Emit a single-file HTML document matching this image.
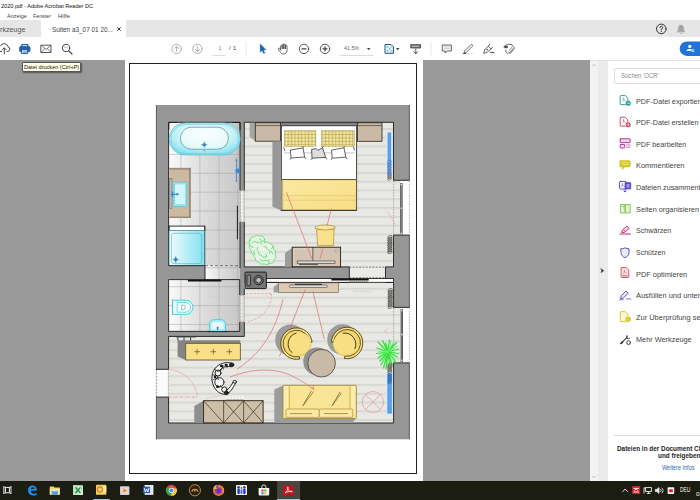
<!DOCTYPE html>
<html><head><meta charset="utf-8">
<style>
*{margin:0;padding:0;box-sizing:border-box}
html,body{width:700px;height:500px;overflow:hidden;background:#fff;font-family:"Liberation Sans",sans-serif;}
#root{position:relative;width:700px;height:500px;overflow:hidden;background:#fff}
.abs{position:absolute}
.t{position:absolute;white-space:nowrap;line-height:1}
#title{left:0;top:0;width:700px;height:11px;background:#fff}
#menu{left:0;top:11px;width:700px;height:10px;background:#fff}
#tabs{left:0;top:20px;width:700px;height:17px;background:#e6e6e6}
#tab{left:41px;top:20.4px;width:85px;height:17px;background:#fff}
#tool{left:0;top:37px;width:700px;height:23px;background:#fff}
#doc{left:0;top:60px;width:590px;height:421px;background:#999}
#paper{left:125px;top:60px;width:298px;height:421px;background:#fff}
#pborder{left:129px;top:63px;width:288px;height:411px;border:1px solid #222}
#sb{left:590px;top:60px;width:8px;height:421px;background:#f3f3f3}
#sb2{left:598px;top:60px;width:10px;height:421px;background:#ebebeb}
#panel{left:608px;top:60px;width:92px;height:421px;background:#fff}
#task{left:0;top:481px;width:700px;height:19px;background:#1b1c12}
.pi{position:absolute;left:635px;font-size:8px;color:#444;white-space:nowrap;line-height:1}
</style></head><body><div id="root">
<div id="title" class="abs"></div>
<div id="menu" class="abs"></div>
<div id="tabs" class="abs"></div>
<div id="tab" class="abs"></div>
<div id="tool" class="abs"></div>
<div id="doc" class="abs"></div>
<div id="paper" class="abs"></div>
<div id="pborder" class="abs"></div>
<div id="sb" class="abs"></div>
<div id="sb2" class="abs"></div>
<div id="panel" class="abs"></div>
<div class="abs" style="left:590px;top:60px;width:110px;height:0.8px;background:#e2e2e2"></div>
<div id="task" class="abs"></div>
<svg class="abs" style="left:0;top:0" width="700" height="500" viewBox="0 0 700 500" fill="none">
<!-- active app highlight -->
<rect x="277.1" y="481" width="23" height="19" fill="#46483e"/>
<rect x="277.1" y="499" width="23" height="1" fill="#9fc6e6"/>
<rect x="93.4" y="499" width="16.4" height="1" fill="#9fc6e6"/>
<!-- task view -->
<g stroke="#f0f0f0" stroke-width="1">
<rect x="5.4" y="487.4" width="4" height="5.4" fill="#1b1c12"/>
<path d="M3.8 486.4 V493.8 M11 486.4 V493.8" stroke-width="0.9"/>
<path d="M3.6 487 h1.2 M3.6 493.200 h1.200 M10 487 h1.200 M10 493.200 h1.200" stroke-width="1.100"/>
</g>
<!-- edge -->
<path d="M28 491.200 C27.600 487.400 30 485.400 32.600 485.400 C35.400 485.400 37 487.600 36.800 490.800 H30.800 C30.900 492.800 32.400 493.700 34.200 493.700 C35.200 493.700 36 493.500 36.600 493.100 V495 C35.800 495.400 34.800 495.600 33.600 495.600 C30.400 495.600 28.200 493.800 28 491.200 Z M30.900 489 H34.400 C34.400 487.800 33.700 487.200 32.700 487.200 C31.700 487.200 31 488 30.900 489 Z" fill="#1f8be8"/>
<!-- explorer -->
<path d="M49.800 486.600 H53.600 L54.600 487.600 H59.800 V494.600 H49.800 Z" fill="#f2d36a"/>
<rect x="49.800" y="488.600" width="10.100" height="6.100" fill="#f7e3a0"/>
<rect x="51.800" y="491" width="6" height="3.700" fill="#4a9be0"/>
<rect x="53" y="490.200" width="3.600" height="1.200" fill="#cfe4f6"/>
<!-- excel -->
<rect x="73" y="485.200" width="10" height="9.800" rx="0.600" fill="#d9efd9"/>
<rect x="73" y="485.200" width="5" height="9.800" fill="#bfe3c1"/>
<path d="M75.600 487.400 L80.400 493 M80.400 487.400 L75.600 493" stroke="#1f8a3c" stroke-width="1.400"/>
<path d="M81 486.600 h1.400 M81 488.600 h1.400 M81 490.600 h1.400" stroke="#6ab97a" stroke-width="0.700"/>
<!-- outlook -->
<rect x="96" y="484.800" width="10.300" height="10" rx="0.600" fill="#f2cf5c"/>
<rect x="101.600" y="486.400" width="4.700" height="6" fill="#f9eab0"/>
<circle cx="100" cy="489.600" r="2.500" stroke="#e08a1e" stroke-width="1.500" fill="#f6dc84"/>
<!-- media player -->
<rect x="120" y="486.200" width="9.400" height="8.800" rx="0.800" fill="#cfcfdc"/>
<rect x="121" y="487.400" width="7.400" height="6.400" fill="#e8d8d0"/>
<path d="M123.400 488.400 L127 490.600 L123.400 492.800 Z" fill="#e97f2e"/>
<!-- word -->
<rect x="144.600" y="485" width="8.800" height="9.800" fill="#f4f6fb"/>
<rect x="143.100" y="486.600" width="7" height="6.600" fill="#2a5db4"/>
<path d="M144.200 488 L145.400 492 L146.600 489 L147.800 492 L149 488" stroke="#fff" stroke-width="0.900" stroke-linejoin="round"/>
<path d="M150.800 487 h1.800 M150.800 489 h1.800 M150.800 491 h1.800" stroke="#9ab4e0" stroke-width="0.600"/>
<!-- chrome -->
<circle cx="171.400" cy="490.300" r="5.500" fill="#e04a3a"/>
<path d="M171.400 490.300 L166.650 487.550 A5.500 5.500 0 0 0 171.400 495.800 L174.150 491.900 Z" fill="#2fa655"/>
<path d="M171.400 490.300 L176.900 490.300 A5.500 5.500 0 0 1 171.400 495.800 L173.600 492 Z" fill="#f5c53a"/>
<path d="M171.400 495.800 A5.500 5.500 0 0 0 176.650 488.600 H171.400 Z" fill="#f5c53a"/>
<circle cx="171.400" cy="490.300" r="2.600" fill="#f2f2f2"/>
<circle cx="171.400" cy="490.300" r="1.900" fill="#4a8af0"/>
<!-- orange ring app -->
<circle cx="194.900" cy="490.300" r="5.600" fill="#2a2418" stroke="#d8923c" stroke-width="0.900"/>
<path d="M191.800 491.600 A3.200 3.200 0 0 1 198 491.600" stroke="#e8a048" stroke-width="1.100"/>
<circle cx="194.900" cy="490.600" r="1.100" fill="#c87a30"/>
<!-- firefox -->
<circle cx="218.600" cy="490.400" r="5.600" fill="#f0702a"/>
<path d="M214 487.400 C215 485.600 217 485 218.400 485.200 C217.600 486 217.600 487 218.400 487.600 C220.600 487.400 222.200 489 222 491 C221.800 493.200 219.800 494.400 217.800 494 C215.600 493.600 214.600 491.600 215.200 489.800 C214.400 489.400 214 488.400 214 487.400 Z" fill="#8a3fc8"/>
<path d="M213.200 489 C213.600 486.400 215.200 485 217 484.800 C215.600 486.400 215.800 488 217 489 Z" fill="#f8b03a"/>
<circle cx="218.800" cy="491" r="2.200" fill="#6a2fb0"/>
<path d="M222.400 486.400 C224.400 488.400 224.600 492 222.600 494.200 C224 491.600 223.400 488.800 222.400 486.400 Z" fill="#f8c040"/>
<!-- people app -->
<rect x="236" y="485" width="11" height="10" rx="0.600" fill="#f4f1d6"/>
<g fill="#2436c4"><circle cx="238.600" cy="487.200" r="1.200"/><rect x="237.400" y="488.600" width="2.400" height="5.400" rx="0.800"/><circle cx="244.400" cy="487.200" r="1.200"/><rect x="243.200" y="488.600" width="2.400" height="5.400" rx="0.800"/><rect x="240.600" y="489.400" width="1.800" height="4.600" rx="0.600" fill="#4a66e0"/><circle cx="241.500" cy="488" r="0.900" fill="#4a66e0"/></g>
<!-- store -->
<path d="M258.600 488 H269.200 V494.600 A0.800 0.800 0 0 1 268.400 495.400 H259.400 A0.800 0.800 0 0 1 258.600 494.600 Z" fill="#f4f4f4"/>
<path d="M261.800 488 V487 A2.100 2.100 0 0 1 266 487 V488" stroke="#f4f4f4" stroke-width="0.900"/>
<rect x="261.400" y="489.400" width="2.200" height="2.200" fill="#e8503a"/><rect x="264.200" y="489.400" width="2.200" height="2.200" fill="#7cba3a"/><rect x="261.400" y="492.200" width="2.200" height="2.200" fill="#3a9ae0"/><rect x="264.200" y="492.200" width="2.200" height="2.200" fill="#f5c53a"/>
<!-- acrobat -->
<rect x="282.800" y="485.200" width="11" height="9.700" rx="0.800" fill="#c5121c"/>
<path d="M285 493 C287 491.400 288.200 489 288.200 487.400 C288.200 486.600 287.400 486.600 287.400 487.600 C287.400 489.400 289.400 491.600 291.800 492 C292.600 492.100 292.600 491.200 291.600 491.200 C289.600 491.200 286.600 492 285 493 Z" stroke="#fff" stroke-width="0.800" stroke-linejoin="round"/>
<!-- tray -->
<path d="M622.400 491.800 L625.100 489.200 L627.800 491.800" stroke="#f0f0f0" stroke-width="1"/>
<rect x="632.100" y="486" width="8.100" height="8" rx="0.600" fill="#c8222c"/>
<path d="M633.400 488.400 H639 M634.600 490.400 L636.200 489 L637.800 490.400 M633.400 492 H639" stroke="#fff" stroke-width="0.900"/>
<g stroke="#f0f0f0" stroke-width="0.900"><rect x="645.600" y="487.600" width="5.800" height="3.800"/><path d="M644 487.600 V493.400 M644 488 H645.600 M646.800 493.400 H650.400 M648.600 491.400 V493.400"/></g>
<g stroke="#f0f0f0" stroke-width="0.800"><path d="M655.400 489.400 H657 L659 487.600 V493.400 L657 491.600 H655.400 Z" fill="#f0f0f0"/><path d="M660.400 489 A2 2 0 0 1 660.400 492 M661.800 487.800 A3.600 3.600 0 0 1 661.800 493.200"/></g>
<rect x="667.600" y="487.300" width="6.600" height="6.800" rx="0.800" fill="#f4f4f4"/>
<rect x="669.400" y="489.200" width="3.400" height="3" fill="#d8222c"/>
<path d="M668.600 490.700 H670" stroke="#d8222c" stroke-width="0.900"/>
</svg>

<div class="abs" style="left:614.3px;top:68.2px;width:100px;height:15.8px;border:0.8px solid #dcdcdc;border-radius:2px;background:#fff"></div>
<div class="abs" style="left:614.2px;top:434.8px;width:90px;height:0.8px;background:#dcdcdc"></div>
<svg class="abs" style="left:0;top:0" width="700" height="500" viewBox="0 0 700 500" fill="none" stroke-linecap="round" stroke-linejoin="round">
<path d="M592.4 66 L594 64.2 L595.6 66" stroke="#aaa" stroke-width="0.7"/>
<path d="M592.4 476 L594 477.8 L595.6 476" stroke="#aaa" stroke-width="0.7"/>
<path d="M600.9 268.6 L603.9 270.7 L600.9 272.8 L601.7 270.7 Z" fill="#333" stroke="#333" stroke-width="0.4"/>
<!-- 1 export pdf (teal) -->
<g stroke="#17968a" stroke-width="0.9">
<path d="M625.2 104.6 H621 A0.8 0.8 0 0 1 620.2 103.8 V96.4 A0.8 0.8 0 0 1 621 95.6 H625.2 L627.8 98.2 V100.4"/>
<path d="M622.6 101.4 C623.4 100.4 624 99 623.9 98 C623.7 97.4 623.2 97.8 623.4 98.6 C623.7 99.8 624.6 100.8 625.6 101" stroke-width="0.5"/>
<circle cx="628.2" cy="103.2" r="2.5" fill="#17968a" stroke="none"/>
<path d="M626.9 103.2 H629.3 M628.4 102.2 L629.4 103.2 L628.4 104.2" stroke="#fff" stroke-width="0.6"/>
</g>
<!-- 2 create pdf (red) -->
<g stroke="#cf3b52" stroke-width="0.9">
<path d="M625.2 126.2 H621 A0.8 0.8 0 0 1 620.2 125.4 V118 A0.8 0.8 0 0 1 621 117.2 H625.2 L627.8 119.8 V122"/>
<path d="M622.6 123 C623.4 122 624 120.6 623.9 119.6 C623.7 119 623.2 119.4 623.4 120.2 C623.7 121.4 624.6 122.4 625.6 122.6" stroke-width="0.5"/>
<circle cx="628.2" cy="124.8" r="2.5" fill="#cf3b52" stroke="none"/>
<path d="M626.9 124.8 H629.5 M628.2 123.5 V126.1" stroke="#fff" stroke-width="0.6"/>
</g>
<!-- 3 edit pdf (magenta) -->
<g stroke="#b8359b" stroke-width="1">
<rect x="620.2" y="138.8" width="10" height="3.8" rx="0.5" fill="#f6d9ef"/>
<rect x="620.2" y="144.4" width="4.4" height="3.6" rx="0.5" fill="#f6d9ef"/>
<path d="M626.4 145 H630.2 M626.4 147.2 H630.2" stroke-width="0.7"/>
</g>
<!-- 4 comment (yellow) -->
<path d="M620.6 160.4 H629.4 A0.8 0.8 0 0 1 630.2 161.2 V166.2 A0.8 0.8 0 0 1 629.4 167 H624.6 L622.4 169.6 V167 H620.6 A0.8 0.8 0 0 1 619.8 166.2 V161.2 A0.8 0.8 0 0 1 620.6 160.4 Z" fill="#d7c526" stroke="#cdb91c" stroke-width="0.5"/>
<path d="M621.8 162.6 H628.2 M621.8 164.6 H628.2" stroke="#f5eea0" stroke-width="0.7"/>
<!-- 5 combine (blue/purple) -->
<g>
<rect x="619.6" y="181.4" width="6.6" height="7.6" rx="0.7" fill="#fff" stroke="#4438b8" stroke-width="0.9"/>
<rect x="625" y="182.6" width="5.8" height="6.4" rx="0.7" fill="#5a4fd0" stroke="#4438b8" stroke-width="0.6"/>
<path d="M621.4 186.8 C622.2 185.8 622.8 184.6 622.6 183.6 C622.4 183 622 183.6 622.2 184.2 C622.6 185.4 623.6 186.4 624.6 186.6" stroke="#4438b8" stroke-width="0.5"/>
<path d="M627.2 184.4 V187.2 M628.8 184.4 V187.2" stroke="#fff" stroke-width="0.6"/>
<path d="M625 189.6 V191.8 M623.8 190.8 L625 192 L626.2 190.8" stroke="#4438b8" stroke-width="0.8"/>
</g>
<!-- 6 organize (green) -->
<g stroke="#7cc043" stroke-width="0.9">
<rect x="620.4" y="204.6" width="4.6" height="8.4" fill="#e6f5d6" stroke-dasharray="1.2 0.8"/>
<rect x="625.8" y="204.6" width="4.4" height="8.4" fill="#e6f5d6"/>
<path d="M621.6 206.4 H623.8 V208" stroke-width="0.6"/>
</g>
<!-- 7 redact (pink) -->
<g stroke="#c4236e" stroke-width="0.9">
<path d="M621.8 232.2 L622.6 229.8 L627 226 L629.2 228.4 L624.6 232.2 Z" fill="#f7d3e3"/>
<path d="M620 234 H630.4" stroke-width="1.2"/>
<path d="M623.4 229.4 L625.4 231.6" stroke-width="0.6"/>
</g>
<!-- 8 protect (shield) -->
<path d="M621 248.8 C622.6 248.8 623.8 248.4 625 247.8 C626.2 248.4 627.4 248.8 629 248.8 V252.8 C629 255.2 627 256.8 625 257.6 C623 256.8 621 255.2 621 252.8 Z" fill="#ecebf8" stroke="#4547a5" stroke-width="0.9"/>
<!-- 9 optimize (red) -->
<g stroke="#cf4a5c" stroke-width="0.9">
<path d="M621.8 267.6 H626.4 L628.8 270 V276.8 A0.7 0.7 0 0 1 628.1 277.5 H621.8 A0.7 0.7 0 0 1 621.1 276.8 V268.3 A0.7 0.7 0 0 1 621.8 267.6 Z" fill="#fbe3e6"/>
<path d="M623.4 273.6 C624.2 272.6 624.8 271.2 624.7 270.2 C624.5 269.6 624 270 624.2 270.8 C624.5 272 625.4 273 626.4 273.2" stroke-width="0.5"/>
<path d="M622.6 275.8 H627.2" stroke-width="0.9"/>
</g>
<!-- 10 fill & sign (purple) -->
<g stroke="#5a3cc0" stroke-width="0.9">
<path d="M620.6 298.4 L621.4 295.6 L626 291 L628.2 293.2 L623.6 297.8 Z" fill="#e9e4fa"/>
<path d="M619.6 300 C621 298.6 622 300.6 623.4 299.6" stroke-width="0.8"/>
<path d="M626 299 C626.8 298 627.6 299.8 628.6 299 S630.2 298.6 631.2 299.6" stroke-width="0.8"/>
</g>
<!-- 11 send for review (yellow) -->
<g stroke="#d2bd1a" stroke-width="0.9">
<path d="M625.4 321.6 H621 A0.7 0.7 0 0 1 620.3 320.9 V312.4 A0.7 0.7 0 0 1 621 311.7 H625.2 L627.8 314.3 V316.6" fill="#fdf9d8"/>
<path d="M626.2 317.4 H630.4 V321 H628.4 L627.4 322.2 V321 H626.2 Z" fill="#e3cf2a" stroke-width="0.7"/>
</g>
<!-- 12 more tools -->
<g stroke="#3a3a3a" stroke-width="1.1">
<path d="M621 343.4 L627.6 336.8"/>
<path d="M627 335.4 A2 2 0 0 0 629.6 338.4" stroke-width="0.9"/>
<circle cx="628.6" cy="342.6" r="1.9" stroke-width="1"/>
<path d="M621 343.4 L622.4 342" stroke-width="1.8"/>
</g>
</svg>

<svg class="abs" style="left:0;top:0" width="700" height="500" viewBox="0 0 700 500" fill="none">
<defs>
<pattern id="woodA" x="0" y="145.5" width="20" height="8.8" patternUnits="userSpaceOnUse"><rect width="20" height="8.8" fill="#e8e8e4"/><rect y="0" width="20" height="0.5" fill="#dfdfdc"/><rect y="0.5" width="20" height="1" fill="#c8c8c5"/><rect y="1.5" width="20" height="0.6" fill="#e0e0dd"/></pattern>
<pattern id="woodB" x="0" y="296.6" width="20" height="8.75" patternUnits="userSpaceOnUse"><rect width="20" height="8.75" fill="#e8e8e4"/><rect y="0" width="20" height="0.5" fill="#dfdfdc"/><rect y="0.5" width="20" height="1" fill="#c8c8c5"/><rect y="1.5" width="20" height="0.6" fill="#e0e0dd"/></pattern>
<linearGradient id="tileG" x1="0" x2="1" y1="0" y2="0"><stop offset="0" stop-color="#fafafa"/><stop offset="0.5" stop-color="#dcdcdc"/><stop offset="1" stop-color="#c8c8c8"/></linearGradient>
<pattern id="tileL" x="180.4" y="153.9" width="19" height="18.9" patternUnits="userSpaceOnUse"><path d="M0 0 V18.9 M0 0 H19" stroke="#9a9a9a" stroke-width="0.9"/></pattern>
<radialGradient id="tubG" cx="0.5" cy="0.35" r="0.7"><stop offset="0" stop-color="#ffffff"/><stop offset="0.45" stop-color="#d9f6fa"/><stop offset="1" stop-color="#7fe1f0"/></radialGradient>
<linearGradient id="showG" x1="0" x2="1"><stop offset="0" stop-color="#f2fcfd"/><stop offset="1" stop-color="#7fe1f0"/></linearGradient>
<pattern id="plaid" x="284.3" y="130.7" width="3.4" height="3.4" patternUnits="userSpaceOnUse"><rect width="3.4" height="3.4" fill="#efdf8c"/><path d="M0 0.5 H3.4 M0.5 0 V3.4" stroke="#c4b56c" stroke-width="0.9"/><rect x="1.4" y="1.4" width="1.3" height="1.3" fill="#fbf3c0"/></pattern>
<linearGradient id="yelG" x1="0" x2="1" y1="0" y2="1"><stop offset="0" stop-color="#fbe9a4"/><stop offset="1" stop-color="#f8dd84"/></linearGradient>
</defs>
<!-- outer walls -->
<rect x="156" y="105" width="253.7" height="334.3" fill="#969696"/>
<path d="M156.4 105 V439.3 M409.3 105 V439.3" stroke="#555" stroke-width="0.9"/>
<!-- entrance opening in left wall -->
<rect x="155.5" y="369.3" width="13.1" height="27.8" fill="#fbfbfb"/>
<path d="M156.6 369.3 V397.1 M168.4 369.3 V397.1" stroke="#888" stroke-width="0.8" stroke-dasharray="2 1.2"/>
<!-- windows right -->
<rect x="393.5" y="180.3" width="17" height="54.8" fill="#fff"/>
<rect x="393.6" y="307.4" width="17" height="55.5" fill="#fff"/>
<!-- bathroom floor -->
<rect x="168.6" y="122.3" width="71.4" height="143.4" fill="url(#tileG)"/>
<rect x="205" y="265" width="35" height="15" fill="url(#tileG)"/>
<rect x="168.6" y="279.3" width="71.1" height="52.1" fill="url(#tileG)"/>
<rect x="168.6" y="122.3" width="71.4" height="143.4" fill="url(#tileL)"/>
<rect x="205" y="265" width="35" height="15" fill="url(#tileL)"/>
<rect x="168.6" y="279.3" width="71.1" height="52.1" fill="url(#tileL)"/>
<!-- bedroom floor -->
<rect x="244.3" y="122.3" width="149.2" height="144.6" fill="url(#woodA)"/>
<rect x="393.5" y="180.3" width="7" height="54.8" fill="url(#woodA)"/>
<rect x="349.3" y="266.9" width="36.2" height="16" fill="#eaeae6"/>
<!-- living floor -->
<path d="M244.3 282.9 H393.6 V423 H168.6 V336.4 H244.3 Z" fill="url(#woodB)"/>
<rect x="393.6" y="307.4" width="7" height="55.5" fill="url(#woodB)"/>
<!-- room outlines -->
<g stroke="#1a1a1a" stroke-width="0.9">
<path d="M168.6 265.7 V122.3 H240 V190.3 M240 222 V268"/>
<path d="M168.6 279.6 H239.7 M168.6 279.6 V331.4 H239.7 V322.1 M239.7 295 V279.6"/>
<path d="M244.3 190.3 V122.3 H393.5 V180.3 M393.5 235.1 V266.9 H385.5 M349.3 266.9 H244.3 V222"/>
<path d="M168.6 369.3 V336.4 H244.3 V322.1 M244.3 295 V288.6 M266.4 282.5 H349.3 V266.9 M385.5 266.9 V282.5 H393.6 V307.4 M393.6 362.9 V423 H168.6 V397.1"/>
<path d="M156 369.3 H168.6 M156 397.1 H168.6 M393.5 180.3 H409.6 M393.5 235.1 H409.6 M393.6 307.4 H409.6 M393.6 362.9 H409.6"/>
</g>
<!-- door openings in bath/bed wall -->
<rect x="240.4" y="190.8" width="3.5" height="30.8" fill="#ededed"/>
<rect x="240.2" y="295.4" width="3.7" height="26.3" fill="#e4e4e4"/>
<path d="M240.3 191 V222 M244 191 V222 M240 295 V322 M244 295 V322" stroke="#999" stroke-width="0.6" stroke-dasharray="2 1.5"/>
<!-- windows frames -->
<g stroke="#999" stroke-width="0.7" stroke-dasharray="1.6 1.2"><path d="M393.6 181 V235 M409.4 181 V235 M393.7 308 V362.5 M409.4 308 V362.5"/></g>
<path d="M401.4 183 V234.5" stroke="#3a3a3a" stroke-width="2.3"/><path d="M401.4 184 V234" stroke="#bdbdbd" stroke-width="0.6"/>
<path d="M401.8 309 V362" stroke="#3a3a3a" stroke-width="2.3"/><path d="M401.8 310 V361.5" stroke="#bdbdbd" stroke-width="0.6"/>
<g fill="#fff" stroke="#666" stroke-width="0.5"><circle cx="401.4" cy="184.6" r="1"/><circle cx="401.4" cy="208.3" r="1"/><circle cx="401.4" cy="233.6" r="1"/><circle cx="401.8" cy="310.6" r="1"/><circle cx="401.8" cy="334.6" r="1"/><circle cx="401.8" cy="360.6" r="1"/></g>
<!-- opening between bedroom and living: dashed lines -->
<path d="M349.3 267.2 H385.5 M349.3 277.7 H385.5" stroke="#555" stroke-width="0.7" stroke-dasharray="2 1.3"/>
<!-- ===== BATHROOM ===== -->
<!-- bathtub -->
<g>
<rect x="169.2" y="122.9" width="71" height="32" rx="16" fill="url(#tubG)" stroke="#55b9c9" stroke-width="0.7"/>
<rect x="171" y="124.4" width="67.4" height="29" rx="14.5" fill="none" stroke="#6cc6d4" stroke-width="0.6"/>
<rect x="180.4" y="127.2" width="48" height="22" rx="11" fill="#f3fdfe" fill-opacity="0.7" stroke="#4d8e98" stroke-width="0.7"/>
<path d="M204.3 142.4 L206.5 144.7 L204.3 147 L202.1 144.7 Z" fill="#2f86d6"/>
<path d="M204.3 141.6 V147.8 M201.3 144.7 H207.3" stroke="#2f86d6" stroke-width="0.6"/>
<circle cx="204.3" cy="150.6" r="0.7" fill="#2f86d6"/>
</g>
<path d="M168.8 122.5 H177 M232 122.5 H240 M168.8 122.5 V130 M240 122.5 V130" stroke="#1a1a1a" stroke-width="0.9"/>
<!-- vanity -->
<rect x="169.2" y="167.9" width="21.5" height="50" fill="#cbb9a0"/>
<rect x="169.2" y="167.9" width="21.5" height="1.8" fill="#9e917d"/>
<rect x="189.2" y="167.9" width="1.5" height="50" fill="#8e8372"/>
<rect x="169.2" y="216.6" width="21.5" height="1.3" fill="#8e8372"/>
<rect x="169.6" y="178.6" width="2.4" height="30" fill="#b8b8b8" stroke="#666" stroke-width="0.5"/>
<rect x="172.9" y="182.1" width="14" height="24.3" fill="#8fe4f1" stroke="#62c3d2" stroke-width="0.7"/>
<rect x="175" y="184.4" width="10" height="19.6" fill="#d4f6fa"/>
<path d="M174.2 184.4 V204" stroke="#7a9aa0" stroke-width="0.8" stroke-dasharray="1 1.6"/>
<path d="M170.8 194.3 H178.6 M172.6 191.6 V197" stroke="#2f7fd4" stroke-width="1.1"/>
<path d="M176.6 192.8 L178.8 194.3 L176.6 195.8 Z" fill="#2f7fd4"/>
<!-- towel radiator -->
<path d="M236.4 158.5 V182" stroke="#3a88dc" stroke-width="0.9"/>
<path d="M236.4 160.5 h0.1 M236.4 181 h0.1" stroke="#3a88dc" stroke-width="1.6" stroke-linecap="round"/>
<rect x="236" y="168.4" width="3.6" height="4.6" rx="1" fill="#3a88dc"/>
<path d="M234.6 170.7 H240" stroke="#3a88dc" stroke-width="0.8"/>
<!-- bath door leaf -->
<path d="M237.4 205.7 V239.3" stroke="#1a1a1a" stroke-width="1"/>
<path d="M226.4 204 V220" stroke="#c4c4c4" stroke-width="0.7" stroke-dasharray="1 1"/>
<!-- shower -->
<rect x="169.2" y="226.1" width="35.6" height="4.6" fill="#fff" stroke="#1a1a1a" stroke-width="0.9"/>
<rect x="169.2" y="230.7" width="35.6" height="35" fill="url(#showG)" stroke="#4fb8c8" stroke-width="0.6"/>
<rect x="171.4" y="233.3" width="30.3" height="30.3" rx="2.5" fill="none" stroke="#5fa9b4" stroke-width="0.6"/>
<path d="M175.7 257 L177.9 259.6 L175.7 262.2 L173.5 259.6 Z" fill="#2f86d6"/>
<path d="M175.7 256 V263.2 M172.4 259.6 H179" stroke="#2f86d6" stroke-width="0.5"/>
<path d="M204.8 226.1 V265.7" stroke="#1a1a1a" stroke-width="0.6"/>
<path d="M168.6 265.7 H205 V279.6" stroke="#1a1a1a" stroke-width="0.9"/>
<path d="M205 265.7 H238" stroke="#555" stroke-width="0.8" stroke-dasharray="3 2"/>
<!-- WC sliding door -->
<path d="M187.9 280.6 H221.4" stroke="#111" stroke-width="1.6"/>
<!-- toilet -->
<path d="M172.6 300.2 H186.5 A7.8 7.2 0 0 1 186.5 314.4 H172.6 Z" fill="#e8fafc" stroke="#45c4d8" stroke-width="0.9"/>
<path d="M177.2 302.4 H186 A5.6 5 0 0 1 186 312.2 H177.2 Z" fill="#f6feff" stroke="#45c4d8" stroke-width="0.7"/>
<path d="M172.2 299 V315.4" stroke="#45c4d8" stroke-width="0.6" stroke-dasharray="1.4 1"/>
<path d="M181.6 305 V309.8 H183 A2.4 2.4 0 0 0 183 305 Z" fill="none" stroke="#4f9cb0" stroke-width="0.6"/>
<!-- small sink -->
<path d="M209.6 331.4 V324 A4.5 4.5 0 0 1 214 319.6 H221 A4.5 4.5 0 0 1 225.5 324 V331.4 Z" fill="#a8ecf5" stroke="#45c4d8" stroke-width="0.8"/>
<path d="M211.4 329 V325 A3 3 0 0 1 214.4 322 H220.6 A3 3 0 0 1 223.6 325 V329 Z" fill="#e4fafc"/>
<rect x="216.8" y="326.4" width="1.6" height="4" rx="0.8" fill="#2f86d6"/>
<path d="M208 331.6 H227" stroke="#1a1a1a" stroke-width="0.9"/>
<path d="M208 297 H222" stroke="#c0c0c0" stroke-width="0.6" stroke-dasharray="1.2 0.8"/>
<!-- ===== BEDROOM ===== -->
<!-- left nightstand -->
<path d="M249.6 122.8 H255.4 V141.2 L249.6 136.4 Z" fill="#a5a5a5"/>
<rect x="255.3" y="122.8" width="25.2" height="18.4" fill="#c9b9a6" stroke="#2a2419" stroke-width="0.8"/>
<path d="M255.3 125.6 H280.5" stroke="#2a2419" stroke-width="0.6"/>
<!-- bed shadow -->
<path d="M272.4 141.6 H281 V210.6 L272.4 206.6 Z" fill="#999"/>
<!-- bed -->
<rect x="280.8" y="122.8" width="76.4" height="3" fill="#8a8a8a" stroke="#222" stroke-width="0.6"/>
<rect x="281.6" y="125.8" width="74.8" height="54" fill="#fff" stroke="#333" stroke-width="0.8"/>
<rect x="284.3" y="130.7" width="31.6" height="15.8" fill="url(#plaid)" stroke="#a99b55" stroke-width="0.5"/>
<rect x="321.4" y="130.7" width="33" height="15.8" fill="url(#plaid)" stroke="#a99b55" stroke-width="0.5"/>
<path d="M284 152.9 H354.6" stroke="#aaa" stroke-width="0.7"/>
<g stroke="#222" stroke-width="0.7" fill="#fff" stroke-linejoin="round">
<path d="M290.4 150 L303 147.9 L304.6 157 L291 158 Z"/>
<path d="M311.6 149.4 L316 148.6 L318 150.4 L322.6 147.8 L325.6 157.4 L312 158.2 Z" fill="#ddd"/>
<path d="M331.6 150 L344 147.8 L345.8 157.2 L332.2 158.2 Z"/>
<path d="M283.6 147.4 L285 151 M353.4 146.6 L354.6 150.4 M291 158 L290 159.600 M304.600 157 L305.800 159 M312 158.200 L311 159.800 M325.600 157.400 L326.800 159.400 M332.200 158.200 L331.200 159.800 M345.800 157.200 L347 159.200 M303 147.900 L303.600 146.400 M322.600 147.800 L323.400 146.200 M344 147.800 L344.600 146.200" fill="none"/>
</g>
<!-- blanket -->
<rect x="281.6" y="179.6" width="74.8" height="30.6" fill="url(#yelG)" stroke="#5a4a20" stroke-width="0.7"/>
<rect x="281.6" y="180" width="1.6" height="30" fill="#c4b486"/>
<path d="M283 195.7 H356 M283 200.2 H356" stroke="#d9bf62" stroke-width="0.6"/>
<path d="M281.6 179.6 H356.4" stroke="#6a5a2a" stroke-width="0.9"/>
<path d="M280.8 210.4 H357" stroke="#333" stroke-width="1"/>
<path d="M356.6 126 V210.4" stroke="#555" stroke-width="0.9"/>
<!-- right nightstand -->
<rect x="357.5" y="122.8" width="24.5" height="18.5" fill="#c9b9a6" stroke="#2a2419" stroke-width="0.8"/>
<path d="M357.5 125.6 H382" stroke="#2a2419" stroke-width="0.6"/>
<!-- bedroom radiator -->
<rect x="386" y="131.4" width="6.8" height="34" rx="1" fill="#d6e9fb"/>
<rect x="387.6" y="132.5" width="3.5" height="28.5" fill="#5a9fe8"/>
<g stroke="#444" stroke-width="0.5" fill="none"><ellipse cx="389.5" cy="174.50" rx="2" ry="1.1" transform="rotate(-18 389.5 174.50)"/><ellipse cx="389.5" cy="176.00" rx="2" ry="1.1" transform="rotate(-18 389.5 176.00)"/><ellipse cx="389.5" cy="177.50" rx="2" ry="1.1" transform="rotate(-18 389.5 177.50)"/><ellipse cx="389.5" cy="179.00" rx="2" ry="1.1" transform="rotate(-18 389.5 179.00)"/></g>
<g stroke="#2f6fd0" stroke-width="0.7" fill="none"><ellipse cx="389.4" cy="161.50" rx="1.9" ry="1.1" transform="rotate(-18 389.4 161.50)"/><ellipse cx="389.4" cy="163.00" rx="1.9" ry="1.1" transform="rotate(-18 389.4 163.00)"/><ellipse cx="389.4" cy="164.50" rx="1.9" ry="1.1" transform="rotate(-18 389.4 164.50)"/><ellipse cx="389.4" cy="166.00" rx="1.9" ry="1.1" transform="rotate(-18 389.4 166.00)"/><ellipse cx="389.4" cy="167.50" rx="1.9" ry="1.1" transform="rotate(-18 389.4 167.50)"/><ellipse cx="389.4" cy="169.00" rx="1.9" ry="1.1" transform="rotate(-18 389.4 169.00)"/><ellipse cx="389.4" cy="170.50" rx="1.9" ry="1.1" transform="rotate(-18 389.4 170.50)"/><ellipse cx="389.4" cy="172.00" rx="1.9" ry="1.1" transform="rotate(-18 389.4 172.00)"/><ellipse cx="389.4" cy="173.50" rx="1.9" ry="1.1" transform="rotate(-18 389.4 173.50)"/></g>
<!-- curtain scribble -->
<g stroke="#2a2a2a" stroke-width="0.55" fill="none"><ellipse cx="389.9" cy="237.00" rx="2.3" ry="1.3" transform="rotate(-18 389.9 237.00)"/><ellipse cx="389.9" cy="238.70" rx="2.3" ry="1.3" transform="rotate(-18 389.9 238.70)"/><ellipse cx="389.9" cy="240.40" rx="2.3" ry="1.3" transform="rotate(-18 389.9 240.40)"/><ellipse cx="389.9" cy="242.10" rx="2.3" ry="1.3" transform="rotate(-18 389.9 242.10)"/><ellipse cx="389.9" cy="243.80" rx="2.3" ry="1.3" transform="rotate(-18 389.9 243.80)"/><ellipse cx="389.9" cy="245.50" rx="2.3" ry="1.3" transform="rotate(-18 389.9 245.50)"/><ellipse cx="389.9" cy="247.20" rx="2.3" ry="1.3" transform="rotate(-18 389.9 247.20)"/><ellipse cx="389.9" cy="248.90" rx="2.3" ry="1.3" transform="rotate(-18 389.9 248.90)"/><ellipse cx="389.9" cy="250.60" rx="2.3" ry="1.3" transform="rotate(-18 389.9 250.60)"/><ellipse cx="389.9" cy="252.30" rx="2.3" ry="1.3" transform="rotate(-18 389.9 252.30)"/></g>
<!-- chair -->
<path d="M316.6 229.6 L317.6 245.6 H333.4 L334.2 229.6 Z" fill="#f9e18c" stroke="#a88d35" stroke-width="0.7"/>
<path d="M315.4 226.6 Q325.2 223.4 335 226.6 V228.6 Q325.2 231.6 315.4 228.6 Z" fill="#fbe89c" stroke="#a88d35" stroke-width="0.7"/>
<!-- desk -->
<path d="M285 253 L292.2 248 V266.7 H285 Z" fill="#9c9c9c"/>
<rect x="292.2" y="247.2" width="48.4" height="19.6" fill="#d4c5b2" stroke="#221c12" stroke-width="0.9"/>
<path d="M312.9 247.2 V260.6" stroke="#221c12" stroke-width="0.6"/>
<rect x="293.8" y="248.8" width="17.4" height="16.6" fill="none" stroke="#eee" stroke-width="0.6" stroke-dasharray="1.4 1.2"/>
<rect x="297.2" y="261" width="37.8" height="2.6" fill="#ddd" stroke="#333" stroke-width="0.6"/>
<path d="M299 264.6 H318" stroke="#333" stroke-width="0.8"/>
<circle cx="336.4" cy="250.7" r="1.4" fill="#ddd" stroke="#777" stroke-width="0.5"/>
<!-- bedroom plant -->
<g transform="translate(-37.5 -33.5) scale(1.15)" stroke="#43dd55" stroke-width="0.65" fill="#ecfcec" fill-opacity="0.6" stroke-linejoin="round" stroke-linecap="round">
<path d="M249.400 238 q0.600-3 4-3 q2-2.400 5-0.400 q3-1 4 2 q1 1.600 0 3.400 q3-1.400 5 1 q3 0.600 2.400 4 q3 1.600 2 5 q2 3-1 5 q0 3.400-3.400 3 q-2 2.600-5 0.600 q-3 1.400-4.600-1.600 q-3.400 0-3-3.400 q-2-1-1.400-3.400 q-3-0.600-2.600-3.600 q-2.400-2-0.800-4.600 q-1.600-2.400 0-4 Z"/>
<path d="M252 240 q2-2.400 4.600 0 q2.400-1.400 3.400 1.400 M256.600 244 q-1.600 2.600 1 4 q-0.600 3 2.400 3 q1 2.600 3.600 1 M262 243.600 q3-0.400 3.400 2.600 q2.600 0.600 1.600 3.400 M259 255 q1.600 2 4 0.600 q2.400 1.400 3.600-1 M253.400 247 q-1 2 1 3.400 M264 250 q1.600 2.400-0.400 4 M268 247 q2 1 1.400 3" fill="none"/>
<path d="M258.600 236.400 l1.600 3 l2.400-2 M250 243 l3 1.400 M266 258.600 l0.600-2.600 M270.600 243.600 l-2 1.600" fill="none"/>
</g>
<!-- ===== LIVING ===== -->
<!-- kettle box -->
<rect x="245" y="272.1" width="21.4" height="16.5" rx="1" fill="#767676" stroke="#111" stroke-width="0.9"/>
<rect x="247" y="275" width="3.6" height="10.700" rx="1" fill="#8a8a8a" stroke="#111" stroke-width="0.7"/>
<circle cx="258.6" cy="280.2" r="4.600" fill="#8a8a8a" stroke="#111" stroke-width="0.9"/>
<circle cx="258.6" cy="280.2" r="2.900" fill="#bcbcbc" stroke="#1a1a1a" stroke-width="0.9"/>
<!-- white strip and sliding door -->
<rect x="266.4" y="278.6" width="127.200" height="3.700" fill="#fff" stroke="#111" stroke-width="0.8"/>
<path d="M331.4 279.600 H368.700" stroke="#111" stroke-width="1.700"/>
<path d="M349.6 281.800 H368" stroke="#222" stroke-width="0.7" stroke-dasharray="1.200 0.800"/>
<!-- TV cabinet -->
<path d="M273.600 287 L278.600 283 V292.600 H273.600 Z" fill="#a0a0a0"/>
<rect x="278.600" y="282.900" width="60" height="9.700" fill="#dccbb4" stroke="#6a5f4c" stroke-width="0.6"/>
<rect x="289.300" y="285" width="38.100" height="2.400" rx="1.200" fill="#e8e8e8" stroke="#333" stroke-width="0.6"/>
<path d="M295 284.300 H322" stroke="#111" stroke-width="0.9"/>
<!-- WC door arc -->
<path d="M246 293.600 H271.400 M271.400 293.600 C272 308 262 319 246 322" stroke="#e58a8a" stroke-width="0.6" stroke-dasharray="2.400 1.400"/>
<!-- faint text -->
<path d="M353 291.300 H371" stroke="#c8c8c8" stroke-width="0.9" stroke-dasharray="1.500 0.800"/>
<!-- curtain living -->
<g stroke="#2a2a2a" stroke-width="0.55" fill="none"><ellipse cx="390.2" cy="290.00" rx="2.3" ry="1.3" transform="rotate(-18 390.2 290.00)"/><ellipse cx="390.2" cy="291.70" rx="2.3" ry="1.3" transform="rotate(-18 390.2 291.70)"/><ellipse cx="390.2" cy="293.40" rx="2.3" ry="1.3" transform="rotate(-18 390.2 293.40)"/><ellipse cx="390.2" cy="295.10" rx="2.3" ry="1.3" transform="rotate(-18 390.2 295.10)"/><ellipse cx="390.2" cy="296.80" rx="2.3" ry="1.3" transform="rotate(-18 390.2 296.80)"/><ellipse cx="390.2" cy="298.50" rx="2.3" ry="1.3" transform="rotate(-18 390.2 298.50)"/><ellipse cx="390.2" cy="300.20" rx="2.3" ry="1.3" transform="rotate(-18 390.2 300.20)"/><ellipse cx="390.2" cy="301.90" rx="2.3" ry="1.3" transform="rotate(-18 390.2 301.90)"/><ellipse cx="390.2" cy="303.60" rx="2.3" ry="1.3" transform="rotate(-18 390.2 303.60)"/><ellipse cx="390.2" cy="305.30" rx="2.3" ry="1.3" transform="rotate(-18 390.2 305.30)"/><ellipse cx="390.2" cy="307.00" rx="2.3" ry="1.3" transform="rotate(-18 390.2 307.00)"/></g>
<!-- armchair left -->
<circle cx="290.600" cy="340" r="15.400" fill="#9c9c9c"/>
<circle cx="296.400" cy="343.600" r="14" fill="#f5d870"/>
<path d="M312.100 342.200 A15.700 15.700 0 1 0 299.600 359 L299.300 356.700 A13.400 13.400 0 1 1 309.800 342.500 Z" fill="#f8e388" stroke="#4e4014" stroke-width="0.9" stroke-linejoin="round"/>
<circle cx="299.500" cy="344" r="11.400" fill="#f9df84"/>
<path d="M296.500 333 A11.400 11.400 0 0 0 292.200 352.700" stroke="#4a3c12" stroke-width="1"/>
<path d="M299.500 355.400 A11.400 11.400 0 0 0 310.900 344" stroke="#c9ad4a" stroke-width="0.5"/>
<!-- armchair right -->
<circle cx="342.400" cy="339.400" r="15.200" fill="#9c9c9c"/>
<circle cx="347.100" cy="342.900" r="14" fill="#f5d870"/>
<path d="M331.400 342.100 A15.700 15.700 0 1 1 344.400 358.400 L344.800 356.100 A13.400 13.400 0 1 0 333.700 342.200 Z" fill="#f8e388" stroke="#4e4014" stroke-width="0.9" stroke-linejoin="round"/>
<circle cx="344.600" cy="344.200" r="11.200" fill="#f9df84"/>
<path d="M342.700 333.200 A11.200 11.200 0 0 1 354.750 348.900" stroke="#4a3c12" stroke-width="1"/>
<path d="M333.400 344.200 A11.200 11.200 0 0 0 344.600 355.400" stroke="#c9ad4a" stroke-width="0.5"/>
<!-- coffee table -->
<circle cx="317.200" cy="361.400" r="13.900" fill="#909090"/>
<circle cx="321.600" cy="363.200" r="13.800" fill="#c9baa8" stroke="#4a4236" stroke-width="0.8"/>
<!-- living plant -->
<ellipse cx="387.600" cy="353.600" rx="8" ry="10.500" fill="#b9f7ba" fill-opacity="0.75"/>
<g stroke="#33df3a" stroke-width="1.200" stroke-linecap="round">
<path d="M388 352 L378 342 M388 352 L382.500 340.500 M388 352 L389.500 340 M388 352 L396.500 342.500 M388 352 L377 348 M388 352 L398.500 349 M388 352 L378 358 M388 352 L397.500 357 M388 352 L381 365 M388 352 L386 369 M388 352 L392.500 366 M388 352 L376.500 353.500 M388 352 L399 353.500 M388 352 L385.500 343 M388 352 L393 344 M388 352 L380 361 M388 352 L396 362.500 M388 352 L383.500 368 M388 352 L389.500 364"/>
</g>
<g stroke="#6aef6e" stroke-width="0.900" stroke-linecap="round"><path d="M388 352 L380 345.500 M388 352 L394 341.500 M388 352 L383.500 361 M388 352 L395.500 360 M388 352 L379 351.500 M388 352 L391 340.500 M388 352 L397.500 346 M388 352 L379.500 355"/></g>
<!-- living radiator + scribble -->
<rect x="386" y="372.500" width="7" height="42" rx="1" fill="#d6e9fb"/>
<rect x="387.300" y="373.600" width="4.600" height="40" fill="#5a9fe8"/>
<g stroke="#333" stroke-width="0.5" fill="none"><ellipse cx="389.7" cy="364.60" rx="2.1" ry="1.2" transform="rotate(-18 389.7 364.60)"/><ellipse cx="389.7" cy="366.10" rx="2.1" ry="1.2" transform="rotate(-18 389.7 366.10)"/><ellipse cx="389.7" cy="367.60" rx="2.1" ry="1.2" transform="rotate(-18 389.7 367.60)"/><ellipse cx="389.7" cy="369.10" rx="2.1" ry="1.2" transform="rotate(-18 389.7 369.10)"/><ellipse cx="389.7" cy="370.60" rx="2.1" ry="1.2" transform="rotate(-18 389.7 370.60)"/><ellipse cx="389.7" cy="372.10" rx="2.1" ry="1.2" transform="rotate(-18 389.7 372.10)"/></g>
<g stroke="#1f4fa8" stroke-width="0.5" fill="none"><ellipse cx="389.7" cy="374.50" rx="1.9" ry="1.1" transform="rotate(-18 389.7 374.50)"/><ellipse cx="389.7" cy="376.10" rx="1.9" ry="1.1" transform="rotate(-18 389.7 376.10)"/><ellipse cx="389.7" cy="377.70" rx="1.9" ry="1.1" transform="rotate(-18 389.7 377.70)"/><ellipse cx="389.7" cy="379.30" rx="1.9" ry="1.1" transform="rotate(-18 389.7 379.30)"/><ellipse cx="389.7" cy="380.90" rx="1.9" ry="1.1" transform="rotate(-18 389.7 380.90)"/><ellipse cx="389.7" cy="382.50" rx="1.9" ry="1.1" transform="rotate(-18 389.7 382.50)"/></g>
<!-- red circle X -->
<g stroke="#e58a8a" stroke-width="0.6"><circle cx="372.900" cy="402.100" r="10.600"/><path d="M365.400 394.600 L380.400 409.600 M380.400 394.600 L365.400 409.600"/></g>
<!-- sofa -->
<path d="M274.300 389.600 L283 385.400 V418.600 H356 L352 423 H274.300 Z" fill="#9c9c9c"/>
<rect x="282.900" y="385.300" width="73.500" height="33.300" rx="1" fill="#fae596" stroke="#8a7428" stroke-width="0.7"/>
<path d="M289.300 385.600 V409 M350 385.600 V409" stroke="#b89d3e" stroke-width="0.7"/>
<rect x="284.600" y="386" width="3.600" height="30" fill="#fcedb0"/>
<rect x="351" y="386" width="4" height="28" fill="#fcedb0"/>
<rect x="286" y="409" width="33.300" height="8.400" rx="1" fill="#fbe9a2" stroke="#a88d35" stroke-width="0.7"/>
<rect x="319.300" y="409" width="33.600" height="8.400" rx="1" fill="#fbe9a2" stroke="#a88d35" stroke-width="0.7"/>
<path d="M290 413.600 H312 M324 413.600 H348" stroke="#6e5c1e" stroke-width="0.6"/>
<path d="M302.900 405.700 L311.400 390.700 M302.900 405.700 L313.600 391.600 M332.100 405.700 L340 391.900 M332.100 405.700 L341.400 393" stroke="#5a4618" stroke-width="0.6"/>
<!-- wardrobe/bench yellow -->
<path d="M177.600 340.200 H240.300 V343.400 H185.700 V360 L177.600 356.600 Z" fill="#858585"/>
<rect x="185.700" y="343.300" width="54.600" height="16.700" fill="#f8e088" stroke="#5a4a20" stroke-width="0.8"/>
<g stroke="#6a5420" stroke-width="0.7"><path d="M194.300 351.700 H199.900 M197.100 348.900 V354.500 M210.500 351.700 H216.100 M213.300 348.900 V354.500 M226.500 351.700 H232.100 M229.300 348.900 V354.500"/></g>
<g stroke="#333" stroke-width="1"><path d="M177.900 337.400 V340.400 M184 337.400 V340.400 M190.600 337.400 V340.400"/></g>
<path d="M176 337 H196" stroke="#333" stroke-width="0.8"/>
<!-- low cabinet -->
<path d="M194.300 406 L203.600 400.700 V422.900 H194.300 Z" fill="#8e8e8e"/>
<rect x="203.600" y="400.700" width="59.500" height="22.200" fill="#ccbea8" stroke="#2a2010" stroke-width="0.9"/>
<g stroke="#3a2c16" stroke-width="0.7"><path d="M223.600 400.700 V422.900 M243.600 400.700 V422.900 M203.600 400.700 L223.600 422.900 M223.600 400.700 L243.600 422.900 M243.600 400.700 L223.600 422.900 M243.600 400.700 L263.100 422.900 M263.100 400.700 L243.600 422.900"/></g>
<g stroke="#fafafa" stroke-width="1.300"><path d="M226.600 395.900 V399.500 M229.800 395.900 V399.500 M233 395.900 V399.500 M236.200 395.900 V399.500 M239.400 395.900 V399.500 M242.400 395.900 V399.500"/></g>
<g stroke="#555" stroke-width="0.4"><path d="M225.600 399.700 H243.400"/></g>
<!-- entrance door swing + dashed -->
<path d="M168.600 369.300 C184 371 196 382 197.400 397.100" stroke="#eba0a0" stroke-width="0.6"/>
<path d="M168.600 397.100 H197.400" stroke="#e07070" stroke-width="0.6" stroke-dasharray="3 1 0.800 1"/>
<path d="M206 398.600 L226 394.600" stroke="#eba0a0" stroke-width="0.5" stroke-dasharray="2 1"/>
<!-- person -->
<g stroke="#111" stroke-width="0.9" fill="#f6f6f6" stroke-linejoin="round" stroke-linecap="round">
<path d="M231.500 363.200 C226 361.400 218.500 363.400 214.600 369 C210.800 374.600 211.200 382.600 214.800 388.200 C217.800 392.800 223 395.400 227.400 393.600 C231 392 233.600 386.600 235.800 382.600 L233.400 381.400 C231.600 385 229.600 388.600 226.600 390 C223.600 389.600 221 387 219.400 384 C216.800 379.600 217 373.600 220 370 C222.600 366.800 227 365.800 230.800 366.600 Z"/>
<circle cx="219.400" cy="382.200" r="4.600"/>
<circle cx="218" cy="373" r="3"/>
<circle cx="224.400" cy="389.600" r="2.700"/>
<path d="M214.600 369 C216 371.600 219.600 372 221.600 369.600 M213 380 C215 378 217.600 378 219 379.600 M216.400 387.600 C218.400 388 220 387 220.600 385.600 M222 365.400 L223.400 369 M226.400 364.400 L227 367.400 M213.200 375 L215.400 375.400" fill="none" stroke-width="0.8"/>
<ellipse cx="231.600" cy="364.800" rx="2.200" ry="1.900" fill="#2a2a2a"/>
<ellipse cx="221.600" cy="366" rx="1.300" ry="1" fill="#2a2a2a"/>
<ellipse cx="226" cy="365" rx="1.100" ry="0.900" fill="#2a2a2a"/>
<ellipse cx="234.800" cy="381.800" rx="1.700" ry="1.400" fill="#fff"/>
<circle cx="226.400" cy="392.800" r="1.900" fill="#2a2a2a"/>
<circle cx="215" cy="377" r="0.900" fill="#2a2a2a"/>
<circle cx="217.600" cy="386.400" r="0.900" fill="#2a2a2a"/>
</g>
<!-- red sight lines -->
<g stroke="#df6c6c" stroke-width="0.7">
<path d="M286.400 192.100 L312.100 259.300"/>
<path d="M331.400 208.600 L327.100 225.700 M322.900 248.600 L320 258.600"/>
<path d="M387 211 L396 225.800" stroke="#f0b4b4"/>
<path d="M305.400 289.300 L290 328"/>
<path d="M312.900 291.400 L324.300 339.300"/>
<path d="M282.900 299.300 C276 330 262 352 240 367 L237 369.400"/>
<path d="M282.900 348.600 L279.300 356.400"/>
<path d="M230 377 C245 371 270 366 290 375 C300 379.600 308 385 313.600 389.300"/>
<path d="M311 387.600 L313.600 389.300 L313 386.200" />
<path d="M387.100 328.600 L384.600 331.400 L387.600 333.400" stroke="#f0a8a8"/>
</g>

</svg>

<svg class="abs" style="left:0;top:0" width="700" height="500" viewBox="0 0 700 500" fill="none" stroke-linecap="round" stroke-linejoin="round">
<!-- cloud upload (partially cut) -->
<g stroke="#444" stroke-width="1">
<path d="M1.5 51.5 H0 M7 51.5 H7.8 A2.4 2.4 0 0 0 8 46.8 A4 4 0 0 0 0.5 45.8"/>
<path d="M4.3 54 V48.2 M2.2 50 L4.3 47.8 L6.4 50"/>
</g>
<!-- printer -->
<g>
<path d="M21.8 47 V44.6 H27.8 V47" stroke="#1f5fa8" stroke-width="1.2"/>
<rect x="19.6" y="46.6" width="10.4" height="5.2" rx="1" fill="#1f5fa8" stroke="#1f5fa8" stroke-width="0.8"/>
<rect x="22" y="49.6" width="5.6" height="4" fill="#dfeaf6" stroke="#1f5fa8" stroke-width="1"/>
<path d="M23.3 51.2 H26.3 M23.3 52.4 H26.3" stroke="#1f5fa8" stroke-width="0.5"/>
</g>
<!-- mail -->
<g stroke="#444" stroke-width="0.9">
<rect x="41.2" y="45.2" width="9.8" height="7.3"/>
<path d="M41.4 45.5 L46.1 49.4 L50.8 45.5 M41.4 52.3 L44.8 48.6 M50.8 52.3 L47.4 48.6" stroke-width="0.7"/>
</g>
<!-- search -->
<g stroke="#444" stroke-width="1">
<circle cx="66" cy="48" r="3.7"/>
<path d="M68.8 50.8 L72 54" stroke-width="1.2"/>
<path d="M64.4 47.2 H67.6" stroke="#999" stroke-width="0.6"/>
</g>
<!-- page up / down -->
<g stroke="#a0a0a0" stroke-width="0.8">
<circle cx="176.6" cy="48.9" r="4.7"/>
<path d="M176.6 51.5 V46.5 M174.6 48.4 L176.6 46.3 L178.6 48.4"/>
<circle cx="197.4" cy="48.9" r="4.7"/>
<path d="M197.4 46.3 V51.3 M195.4 49.4 L197.4 51.5 L199.4 49.4"/>
</g>
<path d="M212 55.4 H225.4" stroke="#d0d0d0" stroke-width="0.8"/>
<path d="M246.2 43 V56 M431 42.5 V55.5" stroke="#e0e0e0" stroke-width="0.8"/>
<!-- select arrow -->
<path d="M260.2 44 L260.2 52.2 L262.1 50.5 L263.6 53.6 L264.9 53 L263.4 50 L265.9 49.8 Z" fill="#1f5fa8" stroke="#1f5fa8" stroke-width="0.4"/>
<!-- hand -->
<g stroke="#444" stroke-width="0.8">
<path d="M280.6 50 V46.2 A0.8 0.8 0 0 1 282.2 46.2 V48.6 M282.2 48.6 V45 A0.8 0.8 0 0 1 283.8 45 V48.4 M283.8 48.4 V44.8 A0.8 0.8 0 0 1 285.4 44.8 V48.6 M285.4 48.6 V46 A0.8 0.8 0 0 1 287 46 V50.4 C287 52.6 286 54 283.6 54 C281.6 54 280.8 53 279.8 51.4 L278.4 49.2 A0.8 0.8 0 0 1 279.7 48.3 L280.6 49.6"/>
</g>
<!-- zoom out / in -->
<g stroke="#444" stroke-width="0.9">
<circle cx="304" cy="48.9" r="4.7"/>
<path d="M302 48.9 H306" stroke-width="1.3"/>
<circle cx="325" cy="48.9" r="4.7"/>
<path d="M323 48.9 H327 M325 46.9 V50.9" stroke-width="1.3"/>
</g>
<path d="M340 55.5 H373" stroke="#d0d0d0" stroke-width="0.8"/>
<path d="M366.9 48 H370.5 L368.7 50.2 Z" fill="#444" stroke="none"/>
<path d="M395.9 48 H399.5 L397.7 50.2 Z" fill="#444" stroke="none"/>
<!-- fit page -->
<g>
<path d="M385.4 44.5 H391 L393.4 46.9 V53.3 H385.4 Z" fill="#eaf6fb" stroke="#1d5570" stroke-width="1"/>
<path d="M386.6 46 h1.8 v1.8 h-1.8z M388.6 48 h1.8 v1.8 h-1.8z M386.6 50 h1.8 v1.8 h-1.8z M390.6 50 h1.8 v1.8 h-1.8z M390.4 46.6 h1.4 v1.2 h-1.4z" fill="#7fc4dc" stroke="none"/>
</g>
<!-- scroll mode -->
<g stroke="#444" stroke-width="0.8">
<rect x="411" y="44.6" width="9.6" height="3.4" fill="#777"/>
<path d="M412.6 46.3 H419" stroke="#eee" stroke-width="0.7" stroke-dasharray="0.8 0.9"/>
<path d="M415.8 49 V53.6 M413.8 51.8 L415.8 53.8 L417.8 51.8" stroke-width="0.9"/>
</g>
<!-- comment -->
<g stroke="#444" stroke-width="0.8">
<path d="M442.6 45 H451.4 V51 H447.2 L445.2 53.2 V51 H442.6 Z" fill="#f4f4f4"/>
<path d="M444.2 46.8 H449.8 M444.2 48.6 H449.8" stroke="#bbb" stroke-width="0.6"/>
</g>
<!-- pen -->
<g stroke="#444" stroke-width="0.8">
<path d="M464.2 53 L465 50.6 L470.8 44.8 A0.9 0.9 0 0 1 472.4 46.2 L466.6 52.2 Z"/>
<path d="M463.2 53.4 H465.5" stroke-width="1"/>
<path d="M466.5 53.4 H472.5" stroke="#ccc" stroke-width="0.7"/>
</g>
<!-- sign -->
<g stroke="#444" stroke-width="0.8">
<path d="M483.800 53 L484.800 49.400 L488.400 46.200 L491 49 L487.600 52 Z"/>
<circle cx="487.100" cy="49.700" r="0.600" stroke-width="0.600"/>
<path d="M488.400 46.200 L489.800 44.200 M491 49 L492.600 47.200"/>
<path d="M490.200 52.300 C491.200 51.700 492.400 52.900 494 52.500" stroke-width="1"/>
</g>
<!-- stamp -->
<g stroke="#444" stroke-width="0.8">
<path d="M504.800 46.200 C505.600 44 509.600 43.600 511.800 44.800"/>
<rect x="504.400" y="46" width="3.200" height="1.800" fill="#444" stroke-width="0.500"/>
<path d="M511.800 44.800 L514.600 48 L510.400 53.400 L508.800 52.200"/>
<path d="M513 48.600 L509.800 52.600 M511.800 47.400 L509.400 50.400" stroke-width="0.600"/>
<path d="M505.800 50 C505.400 52 506.400 53.400 508 53.400"/>
</g>
<!-- help -->
<circle cx="661.3" cy="28.9" r="4.8" stroke="#333" stroke-width="1"/>
<path d="M659.9 27.6 A1.4 1.4 0 1 1 661.3 29 V29.9" stroke="#333" stroke-width="0.9"/>
<circle cx="661.3" cy="31.4" r="0.55" fill="#333"/>
<!-- bell -->
<path d="M677.4 31.8 C678.6 30.8 678.2 28 678.8 26.6 C679.6 24.6 682.4 24.6 683.2 26.6 C683.8 28 683.4 30.8 684.6 31.8 Z" fill="#a3a3a3" stroke="#a3a3a3" stroke-width="0.6"/>
<path d="M680 33 A1 1 0 0 0 682 33 Z" fill="#a3a3a3"/>
<!-- share button -->
<rect x="679.7" y="41.5" width="40" height="14.4" rx="7.2" fill="#2275d7"/>
<circle cx="689.8" cy="46.4" r="1.6" fill="#fff"/>
<path d="M686.6 51 C686.6 48.4 693 48.4 693 51 Z" fill="#fff"/>
<circle cx="693" cy="50.6" r="1.7" fill="#fff" stroke="#2275d7" stroke-width="0.5"/>
<circle cx="693" cy="50.6" r="0.7" fill="#2275d7"/>
<!-- tab close x -->
<path d="M117.6 27.6 L120.4 30.4 M120.4 27.6 L117.6 30.4" stroke="#333" stroke-width="1"/>
</svg>
<!-- tooltip -->
<div class="abs" style="left:21.8px;top:62px;width:59.4px;height:9.6px;background:#ffffe6;border:0.8px solid #555;border-radius:1px;box-shadow:1px 1px 1.5px rgba(0,0,0,0.45)"></div>

<div class="t" style="left:1px;top:3.22px;font-size:6px;color:#111;font-weight:400;transform-origin:0 0;transform:scaleX(0.9255)">2020.pdf - Adobe Acrobat Reader DC</div>
<div class="t" style="left:6.5px;top:12.92px;font-size:6px;color:#444;font-weight:400;transform-origin:0 0;transform:scaleX(0.9176)">Anzeige</div>
<div class="t" style="left:33.1px;top:12.92px;font-size:6px;color:#444;font-weight:400;transform-origin:0 0;transform:scaleX(0.8799)">Fenster</div>
<div class="t" style="left:57.9px;top:12.92px;font-size:6px;color:#444;font-weight:400;transform-origin:0 0;transform:scaleX(1.0070)">Hilfe</div>
<div class="t" style="left:0px;top:25.52px;font-size:7.3px;color:#555;font-weight:400;transform-origin:0 0;transform:scaleX(0.9781)">rkzeuge</div>
<div class="t" style="left:52.1px;top:25.52px;font-size:7.3px;color:#444;font-weight:400;transform-origin:0 0;transform:scaleX(0.8776)">Suiten a3_07 01 20...</div>
<div class="t" style="left:24.2px;top:64.56px;font-size:5.6px;color:#111;font-weight:400;transform-origin:0 0;transform:scaleX(0.9946)">Datei drucken (Ctrl+P)</div>
<div class="t" style="left:218.6px;top:46.06px;font-size:5.6px;color:#555;font-weight:400;transform-origin:0 0;transform:scaleX(0.7040)">1</div>
<div class="t" style="left:228.8px;top:46.06px;font-size:5.6px;color:#555;font-weight:400;transform-origin:0 0;transform:scaleX(1.2030)">/ 1</div>
<div class="t" style="left:343.7px;top:46.06px;font-size:5.6px;color:#666;font-weight:400;transform-origin:0 0;transform:scaleX(0.9512)">41,5%</div>
<div class="t" style="left:621.2px;top:72.86px;font-size:6.9px;color:#8a8a8a;font-weight:400;transform-origin:0 0;transform:scaleX(0.8743)">Suchen 'OCR'</div>
<div class="t" style="left:635.7px;top:118.90px;font-size:7.8px;color:#444;font-weight:400;transform-origin:0 0;transform:scaleX(0.9202)">PDF-Datei erstellen</div>
<div class="t" style="left:635.7px;top:140.50px;font-size:7.8px;color:#444;font-weight:400;transform-origin:0 0;transform:scaleX(0.9211)">PDF bearbeiten</div>
<div class="t" style="left:635.7px;top:162.10px;font-size:7.8px;color:#444;font-weight:400;transform-origin:0 0;transform:scaleX(0.9565)">Kommentieren</div>
<div class="t" style="left:635.7px;top:205.50px;font-size:7.8px;color:#444;font-weight:400;transform-origin:0 0;transform:scaleX(0.9377)">Seiten organisieren</div>
<div class="t" style="left:635.7px;top:227.10px;font-size:7.8px;color:#444;font-weight:400;transform-origin:0 0;transform:scaleX(0.9150)">Schwärzen</div>
<div class="t" style="left:635.7px;top:248.80px;font-size:7.8px;color:#444;font-weight:400;transform-origin:0 0;transform:scaleX(0.9011)">Schützen</div>
<div class="t" style="left:635.7px;top:270.50px;font-size:7.8px;color:#444;font-weight:400;transform-origin:0 0;transform:scaleX(0.9451)">PDF optimieren</div>
<div class="t" style="left:635.7px;top:336.00px;font-size:7.8px;color:#444;font-weight:400;transform-origin:0 0;transform:scaleX(0.9403)">Mehr Werkzeuge</div>
<div class="t" style="left:662.2px;top:464.68px;font-size:6.4px;color:#2c6bb3;font-weight:400;transform-origin:0 0;transform:scaleX(0.8656)">Weitere Infos</div>
<div class="t" style="left:680px;top:487.21px;font-size:6.6px;color:#fff;font-weight:400;transform-origin:0 0;transform:scaleX(0.7398)">DEU</div>
<div class="t" style="left:696px;top:491.69px;font-size:5.8px;color:#fff;font-weight:400;transform-origin:0 0;transform:scaleX(1.1130)">0</div>
<div class="t" style="left:635.7px;top:97.90px;font-size:7.8px;color:#444;font-weight:400;transform-origin:0 0;transform:scaleX(0.9300)">PDF-Datei exportieren</div>
<div class="t" style="left:635.7px;top:183.80px;font-size:7.8px;color:#444;font-weight:400;transform-origin:0 0;transform:scaleX(0.9300)">Dateien zusammenführen</div>
<div class="t" style="left:635.7px;top:292.40px;font-size:7.8px;color:#444;font-weight:400;transform-origin:0 0;transform:scaleX(0.9550)">Ausfüllen und unterschreiben</div>
<div class="t" style="left:635.7px;top:314.40px;font-size:7.8px;color:#444;font-weight:400;transform-origin:0 0;transform:scaleX(0.9550)">Zur Überprüfung senden</div>
<div class="t" style="left:617px;top:446.18px;font-size:6.4px;color:#222;font-weight:700;transform-origin:0 0;transform:scaleX(1.0000)">Dateien in der Document Cloud speichern</div>
<div class="t" style="left:658.1px;top:453.38px;font-size:6.4px;color:#222;font-weight:700;transform-origin:0 0;transform:scaleX(1.0032)">und freigeben</div>

</div></body></html>
